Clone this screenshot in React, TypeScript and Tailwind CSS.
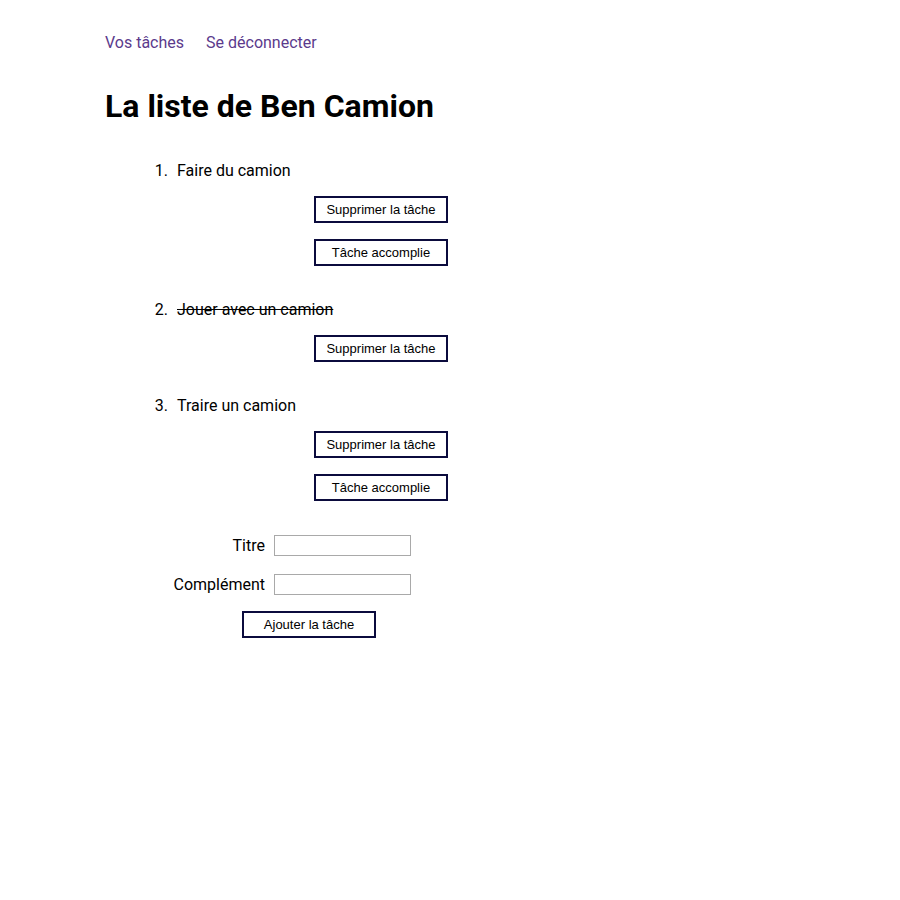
const tasks = [
  { title: 'Faire du camion', done: false },
  { title: 'Jouer avec un camion', done: true },
  { title: 'Traire un camion', done: false },
]

const btn =
  "block h-[27px] w-[134px] border-2 border-[#0b0b3d] bg-white text-[13px] text-black [font-family:'Liberation_Sans',Arial,sans-serif]"

export default function App() {
  return (
    <div className="min-h-[900px] bg-white pl-[105px] pt-[33px] text-black [font-family:Roboto,sans-serif]">
      {/* Nav */}
      <nav className="flex gap-[22px] text-[16px] leading-[20px] text-[#5b3a8c]">
        <a href="#">Vos tâches</a>
        <a href="#">Se déconnecter</a>
      </nav>

      <h1 className="mt-[34px] text-[32px] font-bold leading-[38px]">La liste de Ben Camion</h1>

      {/* Tasks */}
      <ol className="mt-[36px]">
        {tasks.map((t, i) => (
          <li key={i} className={i === 0 ? '' : 'mt-[34px]'}>
            <div className="flex text-[16px] leading-[20px]">
              <span className="w-[72px] pr-[9px] text-right">{i + 1}.</span>
              <span className={t.done ? 'line-through' : ''}>{t.title}</span>
            </div>
            <button className={`${btn} ml-[209px] mt-[15px]`}>Supprimer la tâche</button>
            {!t.done && (
              <button className={`${btn} ml-[209px] mt-[16px]`}>Tâche accomplie</button>
            )}
          </li>
        ))}
      </ol>

      {/* Form */}
      <form className="mt-[34px]">
        <div className="flex items-center">
          <label className="w-[169px] pr-[9px] text-right text-[16px] leading-[20px]">Titre</label>
          <input className="h-[21px] w-[137px] border border-[#a9a9a9]" />
        </div>
        <div className="mt-[18px] flex items-center">
          <label className="w-[169px] pr-[9px] text-right text-[16px] leading-[20px]">Complément</label>
          <input className="h-[21px] w-[137px] border border-[#a9a9a9]" />
        </div>
        <button type="button" className={`${btn} ml-[137px] mt-[16px]`}>Ajouter la tâche</button>
      </form>
    </div>
  )
}
